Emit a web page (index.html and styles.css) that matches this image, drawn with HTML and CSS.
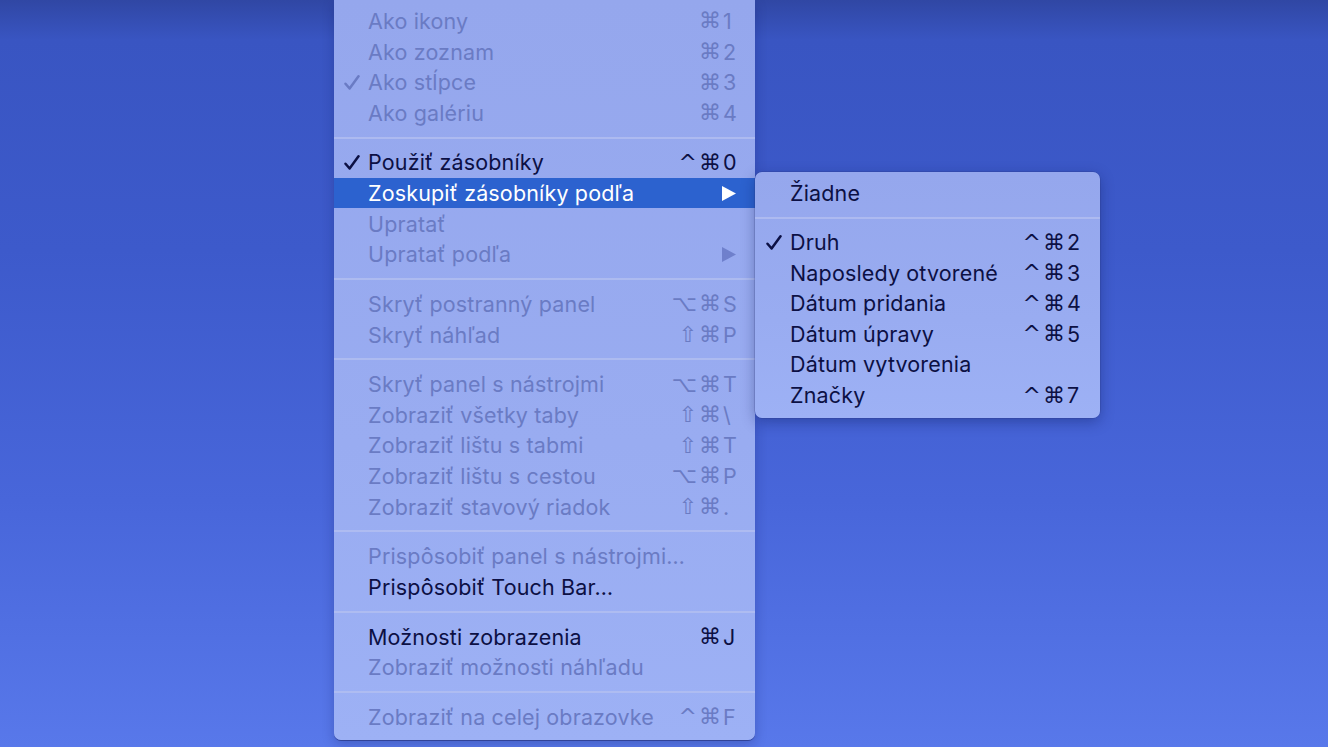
FILE: index.html
```html
<!DOCTYPE html>
<html lang="sk">
<head>
<meta charset="utf-8">
<title>Zobrazenie</title>
<link rel="stylesheet" href="styles.css">
</head>
<body>
<div class="desk">
  <div class="menu main">
    <div class="row dis"><span class="chk"></span><span class="lbl">Ako ikony</span><span class="sc"><span class="mod">⌘</span><span class="key">1</span></span></div>
    <div class="row dis"><span class="chk"></span><span class="lbl">Ako zoznam</span><span class="sc"><span class="mod">⌘</span><span class="key">2</span></span></div>
    <div class="row dis"><span class="chk"><svg viewBox="0 0 16 16"><path d="M1.5 9.2 L5.6 14 L14.5 1.8"/></svg></span><span class="lbl">Ako stĺpce</span><span class="sc"><span class="mod">⌘</span><span class="key">3</span></span></div>
    <div class="row dis"><span class="chk"></span><span class="lbl">Ako galériu</span><span class="sc"><span class="mod">⌘</span><span class="key">4</span></span></div>
    <div class="sep"></div>
    <div class="row"><span class="chk"><svg viewBox="0 0 16 16"><path d="M1.5 9.2 L5.6 14 L14.5 1.8"/></svg></span><span class="lbl">Použiť zásobníky</span><span class="sc"><span class="mod">^⌘</span><span class="key">0</span></span></div>
    <div class="row hl"><span class="chk"></span><span class="lbl">Zoskupiť zásobníky podľa</span><span class="arr"><svg viewBox="0 0 14 15"><path d="M0 0 L14 7.5 L0 15 Z"/></svg></span></div>
    <div class="row dis"><span class="chk"></span><span class="lbl">Upratať</span></div>
    <div class="row dis"><span class="chk"></span><span class="lbl">Upratať podľa</span><span class="arr"><svg viewBox="0 0 14 15"><path d="M0 0 L14 7.5 L0 15 Z"/></svg></span></div>
    <div class="sep"></div>
    <div class="row dis"><span class="chk"></span><span class="lbl">Skryť postranný panel</span><span class="sc"><span class="mod">⌥⌘</span><span class="key">S</span></span></div>
    <div class="row dis"><span class="chk"></span><span class="lbl">Skryť náhľad</span><span class="sc"><span class="mod">⇧⌘</span><span class="key">P</span></span></div>
    <div class="sep"></div>
    <div class="row dis"><span class="chk"></span><span class="lbl">Skryť panel s nástrojmi</span><span class="sc"><span class="mod">⌥⌘</span><span class="key">T</span></span></div>
    <div class="row dis"><span class="chk"></span><span class="lbl">Zobraziť všetky taby</span><span class="sc"><span class="mod">⇧⌘</span><span class="key">\</span></span></div>
    <div class="row dis"><span class="chk"></span><span class="lbl">Zobraziť lištu s tabmi</span><span class="sc"><span class="mod">⇧⌘</span><span class="key">T</span></span></div>
    <div class="row dis"><span class="chk"></span><span class="lbl">Zobraziť lištu s cestou</span><span class="sc"><span class="mod">⌥⌘</span><span class="key">P</span></span></div>
    <div class="row dis"><span class="chk"></span><span class="lbl">Zobraziť stavový riadok</span><span class="sc"><span class="mod">⇧⌘</span><span class="key">.</span></span></div>
    <div class="sep"></div>
    <div class="row dis"><span class="chk"></span><span class="lbl">Prispôsobiť panel s nástrojmi…</span></div>
    <div class="row"><span class="chk"></span><span class="lbl">Prispôsobiť Touch Bar…</span></div>
    <div class="sep"></div>
    <div class="row"><span class="chk"></span><span class="lbl">Možnosti zobrazenia</span><span class="sc"><span class="mod">⌘</span><span class="key">J</span></span></div>
    <div class="row dis"><span class="chk"></span><span class="lbl">Zobraziť možnosti náhľadu</span></div>
    <div class="sep"></div>
    <div class="row dis"><span class="chk"></span><span class="lbl">Zobraziť na celej obrazovke</span><span class="sc"><span class="mod">^⌘</span><span class="key">F</span></span></div>
  </div>
  <div class="menu sub">
    <div class="row"><span class="chk"></span><span class="lbl">Žiadne</span></div>
    <div class="sep"></div>
    <div class="row"><span class="chk"><svg viewBox="0 0 16 16"><path d="M1.5 9.2 L5.6 14 L14.5 1.8"/></svg></span><span class="lbl">Druh</span><span class="sc"><span class="mod">^⌘</span><span class="key">2</span></span></div>
    <div class="row"><span class="chk"></span><span class="lbl">Naposledy otvorené</span><span class="sc"><span class="mod">^⌘</span><span class="key">3</span></span></div>
    <div class="row"><span class="chk"></span><span class="lbl">Dátum pridania</span><span class="sc"><span class="mod">^⌘</span><span class="key">4</span></span></div>
    <div class="row"><span class="chk"></span><span class="lbl">Dátum úpravy</span><span class="sc"><span class="mod">^⌘</span><span class="key">5</span></span></div>
    <div class="row"><span class="chk"></span><span class="lbl">Dátum vytvorenia</span></div>
    <div class="row"><span class="chk"></span><span class="lbl">Značky</span><span class="sc"><span class="mod">^⌘</span><span class="key">7</span></span></div>
  </div>
</div>
</body>
</html>
```

FILE: styles.css
```css
* { box-sizing: border-box; }
html, body { margin: 0; padding: 0; }
body {
  width: 1328px;
  height: 747px;
  overflow: hidden;
  background: linear-gradient(180deg, #3047a4 0px, #3955c2 40px, #3d5acb 250px, #4866da 500px, #5878ea 747px);
  font-family: Inter, "Noto Sans", "DejaVu Sans", sans-serif;
  font-size: 21.5px;
  color: #0c1044;
}
.desk {
  display: flex;
  align-items: flex-start;
  padding-left: 334px;
}
.menu {
  background: linear-gradient(180deg, #95a7ed 0%, #99acf1 60%, #9db1f5 100%);
}
.main {
  width: 421px;
  padding: 5.7px 0 7.7px;
  border-radius: 0 0 7px 7px;
  box-shadow: 0 1px 0 rgba(30,40,110,0.55), 0 4px 12px rgba(10,20,80,0.25);
}
.sub {
  width: 345px;
  margin-top: 172px;
  padding: 5.7px 0 7.7px;
  border-radius: 7px;
  box-shadow: 0 0 0 0.5px rgba(40,50,120,0.4), 0 4px 14px rgba(10,20,80,0.35);
  position: relative;
  z-index: 2;
}
.row {
  height: 30.6px;
  display: flex;
  align-items: center;
  padding-right: 14px;
  white-space: nowrap;
}
.sub .row { padding-right: 15px; }
.row.dis { color: #6a7bc4; }
.row.hl { background: #2c62cf; color: #ffffff; }
.chk {
  width: 34px;
  flex: none;
  display: flex;
  align-items: center;
  padding-left: 10px;
}
.sub .chk { width: 35px; padding-left: 11px; }
.chk svg {
  width: 16px;
  height: 17px;
  fill: none;
  stroke: currentColor;
  stroke-width: 2.5;
  stroke-linecap: round;
  stroke-linejoin: round;
}
.lbl { flex: 1; letter-spacing: 0.15px; }
.sc {
  display: flex;
  align-items: center;
}
.mod {
  letter-spacing: 2px;
  font-family: "DejaVu Sans", Inter, sans-serif;
  font-size: 22px;
}
.key {
  width: 18px;
  text-align: left;
}
.arr {
  display: flex;
  align-items: center;
  padding-right: 5px;
}
.arr svg {
  width: 14px;
  height: 15px;
  fill: currentColor;
}
.row.dis .arr svg { fill: #6f80cc; }
.sep {
  height: 19.1px;
  display: flex;
  align-items: center;
}
.sub .sep { height: 18.5px; }
.sep::before {
  content: "";
  display: block;
  width: 100%;
  height: 2px;
  background: rgba(180,192,240,0.75);
}
```
